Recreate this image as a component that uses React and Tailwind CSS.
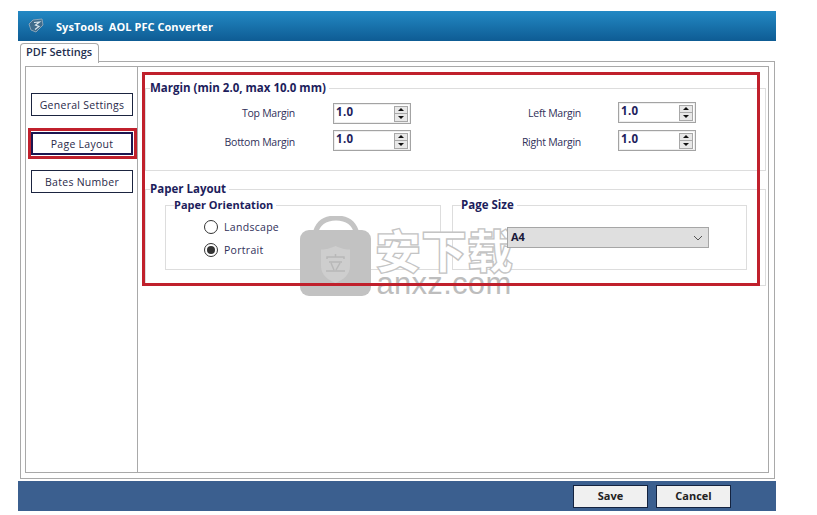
const F = "font-['Open_Sans','Noto_Sans',sans-serif]";

function SideButton({ label, active }) {
  return (
    <div className={active ? "border-[3px] border-[#c0202c] py-[1px] -ml-[3px] w-[109px]" : ""}>
      <button className={`w-[102px] h-[23px] bg-white text-[10.5px] tracking-[0.27px] text-[#2a2a4a] flex items-center justify-center pt-[2px] ${active ? "border-2 border-[#1b1650]" : "border border-[#1b2440]"}`}>
        {label}
      </button>
    </div>
  );
}

function Spinner() {
  return (
    <div className="w-[78px] h-[21px] border border-[#a3a3a3] bg-white flex items-center pl-[2px] pr-[2px] shadow-[inset_0_0_0_1px_#eeeeee]">
      <span className="flex-1 text-[11.5px] font-bold text-[#1d1d5c] -mt-[3px] tracking-[0.3px]">1.0</span>
      <div className="w-[14px] h-[16px] border border-[#a8a8a8] bg-[#e8e8e8] flex flex-col">
        <div className="flex-1 flex items-center justify-center border-b border-[#a8a8a8]">
          <div className="w-0 h-0 border-x-[3px] border-x-transparent border-b-[3px] border-b-[#111]" />
        </div>
        <div className="flex-1 flex items-center justify-center">
          <div className="w-0 h-0 border-x-[3px] border-x-transparent border-t-[3px] border-t-[#111]" />
        </div>
      </div>
    </div>
  );
}

function MarginRow({ label, labelW }) {
  return (
    <div className="flex items-center">
      <span className={`${labelW} text-right text-[10.5px] tracking-[-0.25px] text-[#30305a]`}>{label}</span>
      <Spinner />
    </div>
  );
}

function Radio({ label, checked }) {
  return (
    <div className="flex items-center h-[14px]">
      <div className="w-[14px] h-[14px] rounded-full border border-[#333] bg-white flex items-center justify-center">
        {checked && <div className="w-[8px] h-[8px] rounded-full bg-[#333]" />}
      </div>
      <span className="ml-[6px] mt-[2px] text-[10.5px] tracking-[0.3px] text-[#30305a]">{label}</span>
    </div>
  );
}

function Watermark() {
  return (
    <div className="absolute left-[300px] top-[216px] w-[216px] h-[82px] flex pointer-events-none">
      <svg width="72" height="81" viewBox="0 0 72 81" className="shrink-0">
        <path d="M15 18 C18 5 28 2 36 2 C44 2 54 5 57 18" fill="none" stroke="#c4c4c4" strokeWidth="5" />
        <rect x="0" y="14" width="71" height="66" rx="9" fill="#c2c2c2" />
        <path d="M35.5 30 C42 33 47 33.5 50 33.5 V50 C50 59 43 64 35.5 67 C28 64 21 59 21 50 V33.5 C24 33.5 29 33 35.5 30 Z" fill="#cecece" />
        <path d="M35.5 38 v3 M27 43 v-2 h17 v2 M29 46 h13 M31 47 l3 7 M40 47 l-4 7 M26 55 h19" stroke="#b8b8b8" strokeWidth="1.5" fill="none" />
      </svg>
      <div className="ml-[3px] flex flex-col items-center">
        <span className="text-[46px] leading-[48px] font-black font-['Noto_Sans_CJK_SC',sans-serif] text-[#ffffff] [-webkit-text-stroke:1.3px_#c4c4c4] whitespace-nowrap mt-[8px]">安下载</span>
        <span className="text-[31px] leading-[26px] font-['Liberation_Sans',sans-serif] text-[#bdbdbd] tracking-[0.3px] -mt-[1px]">anxz.com</span>
      </div>
    </div>
  );
}

export default function App() {
  const legend = "text-[11.5px] leading-[14px] font-bold text-[#1d1d5c]";
  return (
    <div className={`relative w-[817px] h-[515px] bg-white overflow-hidden pt-[11px] pl-[18px] ${F}`}>
      <div className="w-[758px] h-[500px] flex flex-col">
        <header className="h-[30px] shrink-0 bg-gradient-to-b from-[#2389c4] to-[#0e5c94] flex items-center pl-[8px]">
          <svg width="20" height="18" viewBox="0 0 20 18" className="mt-[-1px]">
            <path d="M3 7 L7 3 L16 2 L17 8 L10 15 L5 13 Z" fill="#3f6c8c" stroke="#8aa4b8" strokeWidth="1" />
            <path d="M8 5.5 L13.5 5 L9.5 8 L13 9.5 L9 12.5" fill="none" stroke="#dbe6ed" strokeWidth="1.2" />
          </svg>
          <span className="ml-[10px] mt-[2px] text-white text-[11px] font-bold whitespace-pre tracking-[0.05px]">SysTools  AOL PFC Converter</span>
        </header>
        <div className="flex-1 flex flex-col pl-[2px] pr-[1px]">
          <div className="h-[21px] pt-[2px] shrink-0 flex">
            <div className="relative z-10 w-[79px] h-[20px] border border-b-0 border-[#a9a9a9] rounded-t-[4px] bg-white flex items-center pl-[5px] pb-[2px] text-[11px] font-semibold text-[#1f2f4f]">
              PDF Settings
            </div>
          </div>
          <div className="h-[418px] shrink-0 border border-[#a9a9a9] p-[4px] pr-[5px] pb-[5px] bg-white -mt-[1px]">
            <div className="h-full border border-[#a9a9a9] flex">
              <aside className="w-[112px] shrink-0 border-r border-[#a9a9a9] pl-[5px] pt-[26px] flex flex-col">
                <SideButton label="General Settings" />
                <div className="h-[12px]" />
                <SideButton label="Page Layout" active />
                <div className="h-[11px]" />
                <SideButton label="Bates Number" />
              </aside>
              <main className="flex-1 pl-[7px] pt-[14px] pr-[6px]">
                <fieldset className="border border-[#dddddd] pl-[4px] h-[90px]">
                  <legend className={`${legend} pr-[3px]`}>Margin (min 2.0, max 10.0 mm)</legend>
                  <div className="flex pt-[8px]">
                    <div className="flex flex-col gap-[6px]">
                      <MarginRow label="Top Margin" labelW="w-[183px] pr-[38px]" />
                      <MarginRow label="Bottom Margin" labelW="w-[183px] pr-[38px] pt-[4px]" />
                    </div>
                    <div className="flex flex-col gap-[7px] ml-[26px] -mt-[1px]">
                      <MarginRow label="Left Margin" labelW="w-[181px] pr-[37px] pt-[3px]" />
                      <MarginRow label="Right Margin" labelW="w-[181px] pr-[37px] pt-[4px]" />
                    </div>
                  </div>
                </fieldset>
                <fieldset className="border border-[#dddddd] mt-[11px] pl-[4px] pr-[18px] h-[104px]">
                  <legend className={`${legend} pr-[3px]`}>Paper Layout</legend>
                  <div className="flex gap-[11px] ml-[15px] mt-[2px]">
                    <fieldset className="w-[276px] h-[72px] border border-[#dddddd] pl-[8px]">
                      <legend className={`${legend} text-[11px] pr-[3px]`}>Paper Orientation</legend>
                      <div className="pl-[30px] pt-[8px] flex flex-col gap-[9px]">
                        <Radio label="Landscape" />
                        <Radio label="Portrait" checked />
                      </div>
                    </fieldset>
                    <fieldset className="w-[295px] h-[72px] border border-[#dddddd] pl-[8px]">
                      <legend className={`${legend} pr-[3px]`}>Page Size</legend>
                      <div className="pl-[46px] pt-[15px]">
                        <div className="relative z-10 w-[202px] h-[21px] bg-[#dfdfdf] border border-[#a6a6a6] flex items-center justify-between pl-[3px] pr-[5px]">
                          <span className="text-[11px] font-bold text-[#1a1a3a]">A4</span>
                          <svg width="10" height="6" viewBox="0 0 10 6"><path d="M1 1 L5 5 L9 1" fill="none" stroke="#555" strokeWidth="1" /></svg>
                        </div>
                      </div>
                    </fieldset>
                  </div>
                </fieldset>
              </main>
            </div>
          </div>
        </div>
        <footer className="h-[30px] shrink-0 bg-[#3b5f8f] flex items-center justify-end gap-[8px] pr-[45px]">
          <button className="w-[75px] h-[23px] bg-[#f0f0f0] border border-[#14233f] text-[11px] font-bold text-[#222]">Save</button>
          <button className="w-[75px] h-[23px] bg-[#f0f0f0] border border-[#14233f] text-[11px] font-bold text-[#222]">Cancel</button>
        </footer>
      </div>
      <Watermark />
      <div className="absolute left-[142px] top-[72px] w-[618px] h-[214px] border-[3px] border-[#c0202c] pointer-events-none" />
    </div>
  );
}
